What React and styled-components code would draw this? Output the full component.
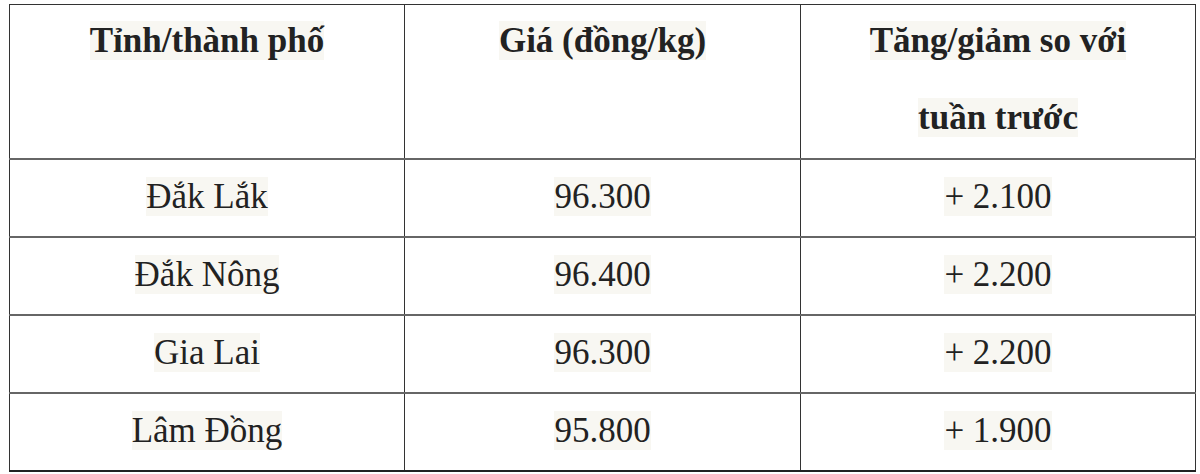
import React from "react";
import styled, { createGlobalStyle } from "styled-components";

const Global = createGlobalStyle`
  html, body { margin: 0; padding: 0; background: #ffffff; }
  body { font-family: "Liberation Serif", "Times New Roman", serif; color: #222; }
`;

const Page = styled.div`
  padding: 4px 5px 0 9px;
  width: 1200px;
  box-sizing: border-box;
`;

const Table = styled.table`
  width: 1186px;
  border-collapse: collapse;
  table-layout: fixed;
`;

const Col = styled.col`
  width: ${(p) => p.$w}px;
`;

const HeadCell = styled.th`
  border: 1px solid #333;
  border-bottom: 2px solid #666;
  vertical-align: top;
  text-align: center;
  font-weight: bold;
  font-size: 35px;
  line-height: 77px;
  height: 153px;
  padding: 0;
`;

const HeadText = styled.div`
  margin-top: -3px;
`;

const Cell = styled.td`
  border-left: 1px solid #333;
  border-right: 1px solid #333;
  border-bottom: ${(p) => (p.$last ? "2px solid #222" : "2px solid #666")};
  text-align: center;
  vertical-align: middle;
  font-size: 35px;
  line-height: 40px;
  height: 74px;
  padding: 0 0 2px 0;
`;

const Mark = styled.span`
  background: #f8f7f2;
  color: #222;
`;

const rows = [
  ["Đắk Lắk", "96.300", "+ 2.100"],
  ["Đắk Nông", "96.400", "+ 2.200"],
  ["Gia Lai", "96.300", "+ 2.200"],
  ["Lâm Đồng", "95.800", "+ 1.900"],
];

export default function App() {
  return (
    <>
      <Global />
      <Page>
        <Table>
          <colgroup>
            <Col $w={395} />
            <Col $w={396} />
            <Col $w={395} />
          </colgroup>
          <thead>
            <tr>
              <HeadCell>
                <HeadText>
                  <Mark>Tỉnh/thành phố</Mark>
                </HeadText>
              </HeadCell>
              <HeadCell>
                <HeadText>
                  <Mark>Giá (đồng/kg)</Mark>
                </HeadText>
              </HeadCell>
              <HeadCell>
                <HeadText>
                  <Mark>Tăng/giảm so với</Mark>
                  <br />
                  <Mark>tuần trước</Mark>
                </HeadText>
              </HeadCell>
            </tr>
          </thead>
          <tbody>
            {rows.map((r, i) => (
              <tr key={i}>
                {r.map((c, j) => (
                  <Cell key={j} $last={i === rows.length - 1}>
                    <Mark>{c}</Mark>
                  </Cell>
                ))}
              </tr>
            ))}
          </tbody>
        </Table>
      </Page>
    </>
  );
}
